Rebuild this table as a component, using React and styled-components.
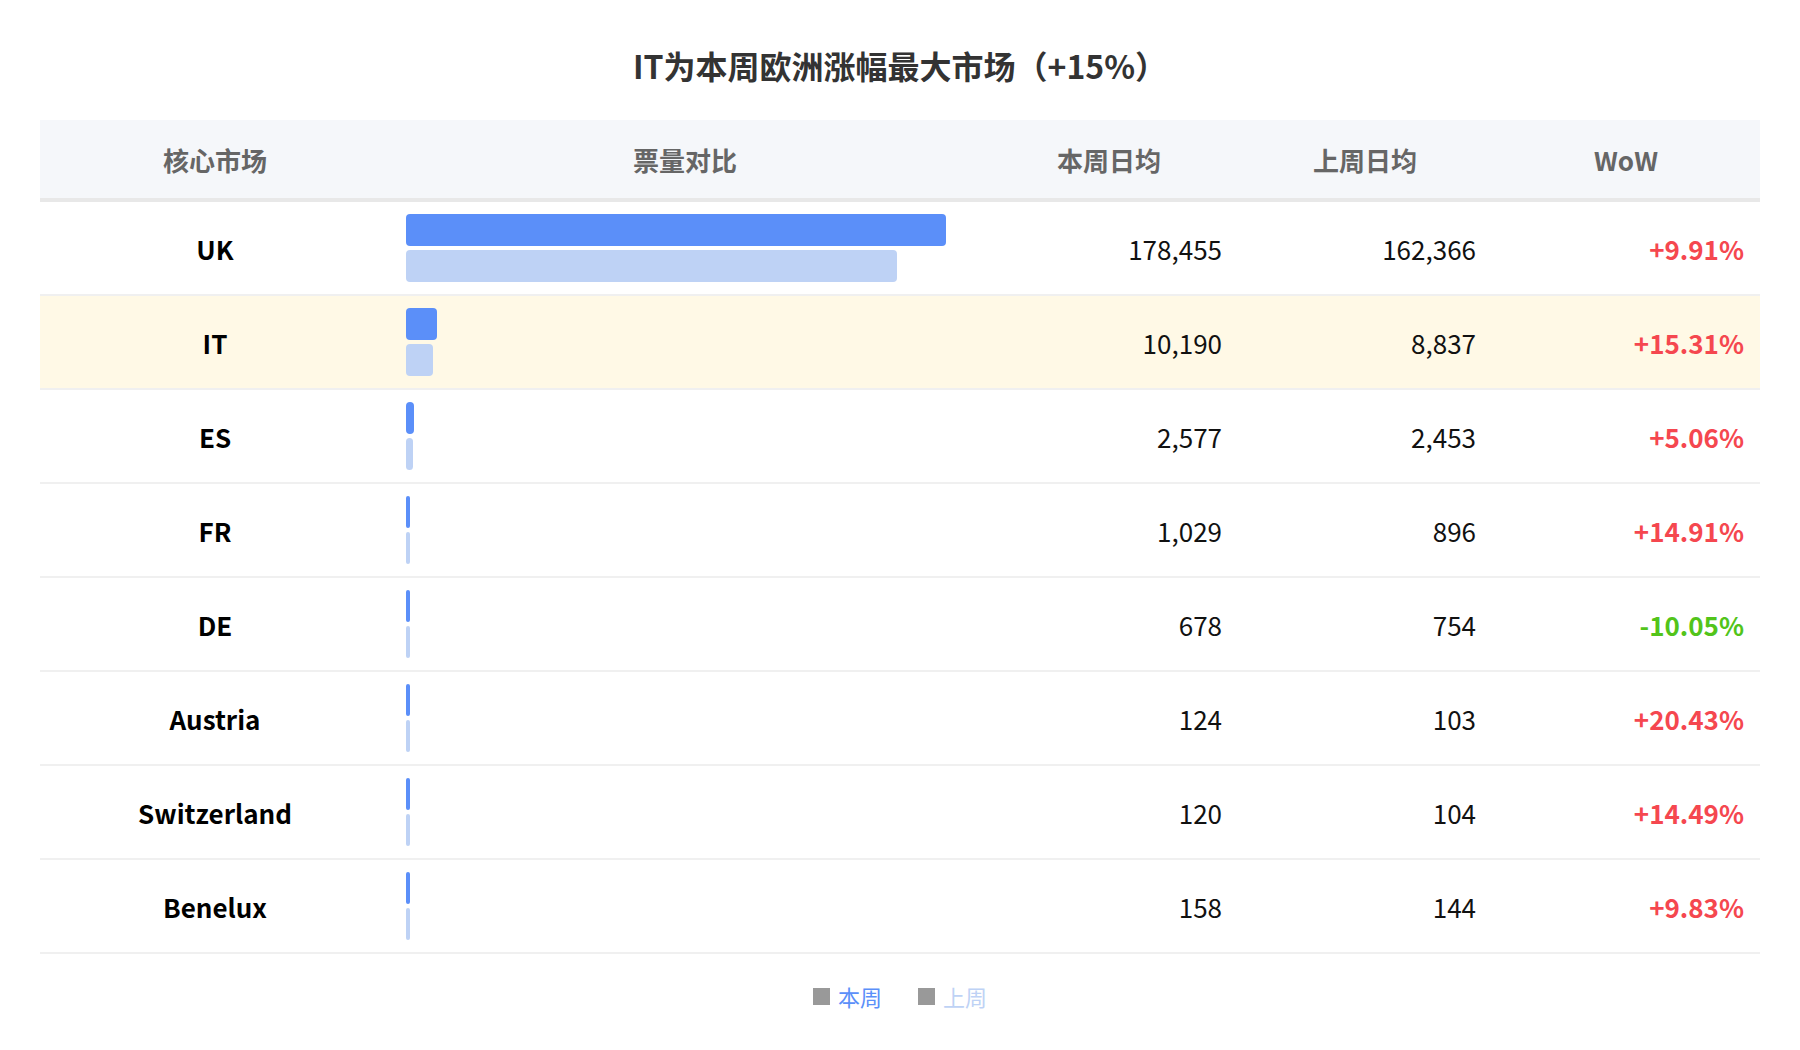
import React from "react";
import styled, { createGlobalStyle } from "styled-components";

const GlobalStyle = createGlobalStyle`
  body {
    margin: 0;
    background: #fff;
    font-family: "Noto Sans CJK SC", "Noto Sans", sans-serif;
  }
`;

const Page = styled.div`
  width: 1800px;
  padding: 44px 40px 0;
  box-sizing: border-box;
`;

const Title = styled.h1`
  margin: 0 0 34px;
  height: 42px;
  line-height: 42px;
  font-size: 32px;
  font-weight: 700;
  color: #333;
  text-align: center;
`;

const Grid = styled.div`
  display: grid;
  grid-template-columns: 350px 590px 258px 254px 268px;
`;

const HeadCell = styled.div`
  height: 78px;
  background: #f5f7fa;
  border-bottom: 4px solid #e8e8e8;
  display: flex;
  align-items: center;
  justify-content: center;
  font-size: 26px;
  font-weight: 700;
  color: #666;
`;

const Cell = styled.div`
  height: 92px;
  border-bottom: 2px solid #f0f0f0;
  background: ${(p) => (p.$hl ? "#fff9e6" : "#fff")};
  display: flex;
  align-items: center;
  padding: 0 16px;
  justify-content: ${(p) => p.$align || "flex-end"};
  font-size: 26px;
  color: #111;
`;

const Market = styled(Cell)`
  font-weight: 700;
  color: #000;
`;

const Change = styled(Cell)`
  font-weight: 700;
  color: ${(p) => (p.$down ? "#52c41a" : "#f5474f")};
`;

const Bars = styled.div`
  display: flex;
  flex-direction: column;
  gap: 4px;
`;

const Bar = styled.div`
  height: 32px;
  border-radius: 4px;
  background: ${(p) => (p.$prev ? "#bed2f5" : "#5b8ff9")};
`;

const Legend = styled.div`
  display: flex;
  justify-content: center;
  gap: 36px;
  margin-top: 27px;
`;

const LegendItem = styled.div`
  display: flex;
  align-items: center;
  gap: 8px;
  font-size: 22px;
  line-height: 30px;
  color: ${(p) => p.$color};
`;

const Swatch = styled.span`
  width: 17px;
  height: 17px;
  background: #999;
`;

const rows = [
  { name: "UK", cur: 178455, prev: 162366, wow: "+9.91%" },
  { name: "IT", cur: 10190, prev: 8837, wow: "+15.31%", hl: true },
  { name: "ES", cur: 2577, prev: 2453, wow: "+5.06%" },
  { name: "FR", cur: 1029, prev: 896, wow: "+14.91%" },
  { name: "DE", cur: 678, prev: 754, wow: "-10.05%", down: true },
  { name: "Austria", cur: 124, prev: 103, wow: "+20.43%" },
  { name: "Switzerland", cur: 120, prev: 104, wow: "+14.49%" },
  { name: "Benelux", cur: 158, prev: 144, wow: "+9.83%" },
];

const MAX = 178455;
const barWidth = (v) => Math.max(4, (v / MAX) * 540);
const fmt = (v) => v.toLocaleString("en-US");

const App = () => (
  <Page>
    <GlobalStyle />
    <Title>IT为本周欧洲涨幅最大市场（+15%）</Title>
    <Grid>
      <HeadCell>核心市场</HeadCell>
      <HeadCell>票量对比</HeadCell>
      <HeadCell>本周日均</HeadCell>
      <HeadCell>上周日均</HeadCell>
      <HeadCell>WoW</HeadCell>
      {rows.map((r) => (
        <React.Fragment key={r.name}>
          <Market $hl={r.hl} $align="center">
            {r.name}
          </Market>
          <Cell $hl={r.hl} $align="flex-start">
            <Bars>
              <Bar style={{ width: barWidth(r.cur) }} />
              <Bar $prev style={{ width: barWidth(r.prev) }} />
            </Bars>
          </Cell>
          <Cell $hl={r.hl}>{fmt(r.cur)}</Cell>
          <Cell $hl={r.hl}>{fmt(r.prev)}</Cell>
          <Change $hl={r.hl} $down={r.down}>
            {r.wow}
          </Change>
        </React.Fragment>
      ))}
    </Grid>
    <Legend>
      <LegendItem $color="#5b8ff9">
        <Swatch />
        本周
      </LegendItem>
      <LegendItem $color="#bed2f5">
        <Swatch />
        上周
      </LegendItem>
    </Legend>
  </Page>
);

export default App;
